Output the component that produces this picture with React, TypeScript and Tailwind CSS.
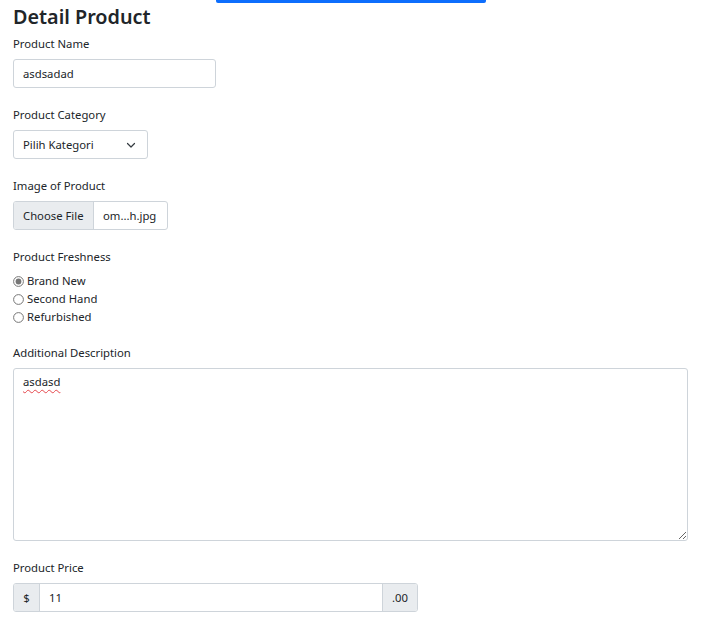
import React from "react";

const font = { fontFamily: '"Noto Sans", "Open Sans", sans-serif' };

function Radio({ checked, label }: { checked?: boolean; label: string }) {
  return (
    <div className="flex items-center h-[18px]">
      <svg width="11" height="11" viewBox="0 0 11 11" className="mr-[3px]">
        <circle cx="5.5" cy="5.5" r="4.9" fill="white" stroke="#767676" strokeWidth="1" />
        {checked && <circle cx="5.5" cy="5.5" r="2.9" fill="#767676" />}
      </svg>
      <span>{label}</span>
    </div>
  );
}

export default function App() {
  return (
    <div className="bg-white min-h-[624px] text-[#212529] text-[11.3px] leading-[18px]" style={font}>
      <div className="ml-[216px] w-[270px] h-[3px] bg-[#0d6efd] rounded-b-[2px]" />
      <div className="px-[13px]">
        <h3 className="text-[19.8px] leading-[25px] font-semibold mt-[1px] mb-[6px]">Detail Product</h3>

        <label className="block mb-[6px]">Product Name</label>
        <div className="w-[203px] h-[29px] border border-[#ced4da] rounded-[3px] flex items-center px-[9px] mb-[18px]">
          asdsadad
        </div>

        <label className="block mb-[6px]">Product Category</label>
        <div className="w-[135px] h-[29px] border border-[#ced4da] rounded-[3px] flex items-center justify-between pl-[9px] pr-[11px] mb-[18px]">
          <span>Pilih Kategori</span>
          <svg width="10" height="8" viewBox="0 0 10 8">
            <path d="M1.5 2.5 L5 6 L8.5 2.5" fill="none" stroke="#343a40" strokeWidth="1.2" strokeLinecap="round" strokeLinejoin="round" />
          </svg>
        </div>

        <label className="block mb-[6px]">Image of Product</label>
        <div className="w-[155px] h-[29px] border border-[#ced4da] rounded-[3px] flex mb-[18px] overflow-hidden">
          <div className="bg-[#e9ecef] w-[80px] border-r border-[#ced4da] flex items-center pl-[9px]">Choose File</div>
          <div className="flex items-center pl-[9px]">om...h.jpg</div>
        </div>

        <label className="block mb-[6px]">Product Freshness</label>
        <div className="mb-[18px]">
          <Radio checked label="Brand New" />
          <Radio label="Second Hand" />
          <Radio label="Refurbished" />
        </div>

        <label className="block mb-[6px]">Additional Description</label>
        <div className="relative mb-[18px]">
          <textarea
            className="block w-[675px] h-[173px] border border-[#ced4da] rounded-[3px] px-[9px] py-[5px] outline-none"
            defaultValue=""
          />
          <span className="absolute left-[10px] top-[5px] underline decoration-wavy decoration-[#e5484d] decoration-1 underline-offset-[3px]">
            asdasd
          </span>
        </div>

        <label className="block mb-[6px]">Product Price</label>
        <div className="w-[405px] h-[29px] border border-[#ced4da] rounded-[3px] flex overflow-hidden">
          <div className="bg-[#e9ecef] w-[26px] border-r border-[#ced4da] flex items-center justify-center">$</div>
          <div className="flex-1 flex items-center pl-[9px]">11</div>
          <div className="bg-[#e9ecef] w-[35px] border-l border-[#ced4da] flex items-center justify-center">.00</div>
        </div>
      </div>
    </div>
  );
}
